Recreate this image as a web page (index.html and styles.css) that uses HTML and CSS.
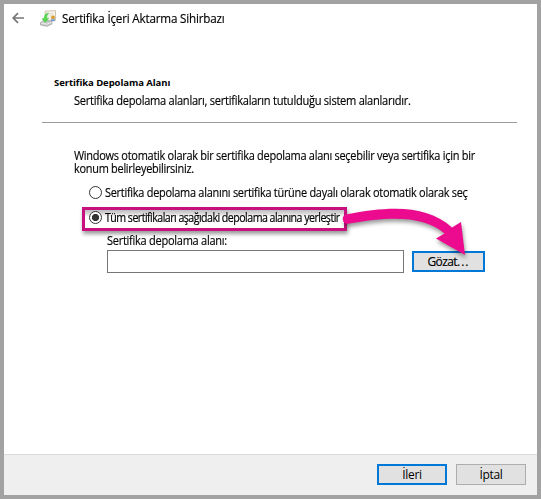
FILE: index.html
```html
<!DOCTYPE html>
<html lang="tr">
<head>
<meta charset="utf-8">
<title>Sertifika İçeri Aktarma Sihirbazı</title>
<link rel="stylesheet" href="styles.css">
</head>
<body>
<div class="window">
  <header class="titlebar">
    <svg class="back" width="13" height="12" viewBox="0 0 13 12"><path d="M12 6H1.500M6 1.200L1.200 6l4.800 4.800" fill="none" stroke="#777" stroke-width="1.700"/></svg>
    <svg class="cert" width="17" height="17" viewBox="0 0 17 17">
      <path d="M5 1.200L15.500 .6v9.600l-9.500 .8z" fill="#f4f0e8" stroke="#c9c0a8" stroke-width=".9"/>
      <path d="M8 4l5-.3M10 6l3-.2" stroke="#ddd7c8" stroke-width=".8"/>
      <path d="M.5 12.500L4 10.200l8 1.200v2.500L7 16.300 .5 15z" fill="#c6c8c6" stroke="#9b9e9b" stroke-width=".7"/>
      <path d="M1 13l6 1.200L12 12" fill="none" stroke="#f4f4f4" stroke-width=".8"/>
      <path d="M8.800 3.200C5.500 3 4.200 5 4.200 8.400L2 8.800 5.200 12.500l3.600-4.200-2 .1C6.600 6 7 4.700 8.800 3.200z" fill="#50d84a" stroke="#55c455" stroke-width=".5"/>
      <path d="M12 8.500v3M14 8.500v2.800" stroke="#3d78c2" stroke-width="1.100" fill="none"/>
      <circle cx="13" cy="7.300" r="1.800" fill="#d99a25"/>
    </svg>
    <h1 class="title">Sertifika İçeri Aktarma Sihirbazı</h1>
  </header>
  <main class="page">
    <h2 class="heading">Sertifika Depolama Alanı</h2>
    <p class="subtitle">Sertifika depolama alanları, sertifikaların tutulduğu sistem alanlarıdır.</p>
    <div class="rule"></div>
    <div class="intro">
      <p class="intro-a">Windows otomatik olarak bir sertifika depolama alanı seçebilir veya sertifika için bir</p>
      <p class="intro-b">konum belirleyebilirsiniz.</p>
    </div>
    <div class="option"><span class="radio"></span><span class="opt-auto">Sertifika depolama alanını sertifika türüne dayalı olarak otomatik olarak seç</span></div>
    <div class="option marked"><span class="radio checked"></span><span class="opt-all">Tüm sertifikaları aşağıdaki depolama alanına yerleştir</span></div>
    <div class="label">Sertifika depolama alanı:</div>
    <div class="picker">
      <div class="field"></div>
      <div class="button primary browse">Gözat<span class="dots">...</span></div>
    </div>
  </main>
  <footer class="footer">
    <div class="button primary">İleri</div>
    <div class="button">İptal</div>
  </footer>
</div>
<svg class="arrow" width="150" height="70" viewBox="340 200 150 70">
  <path d="M346 214.500C394 205 428 206 452 227.500L461 222 465 255 436 238.500 444.500 233.500C424 216 392 216 348 223.800A4.800 4.800 0 0 1 346 214.500Z" fill="#ec0a8e"/>
</svg>
</body>
</html>
```
FILE: styles.css
```css
* { box-sizing: border-box; }
body {
  margin: 0;
  width: 541px;
  height: 499px;
  background: #a2a2a2;
  font: 12px/16px "Open Sans", "Noto Sans", sans-serif;
  color: #000;
  padding: 4px;
  overflow: hidden;
}
h1, h2, p { margin: 0; font-weight: 400; font-size: 12px; }
span, h1, h2, p, .label { white-space: nowrap; transform-origin: 0 50%; }
.window {
  width: 533px;
  height: 491px;
  background: #fff;
  display: flex;
  flex-direction: column;
}
.titlebar {
  height: 28px;
  display: flex;
  align-items: center;
  padding-left: 8px;
}
.cert { margin-left: 15px; }
.title { margin: 2px 0 0 5px; letter-spacing: -0.2px; transform: scaleX(0.972); -webkit-text-stroke: 0.15px #000; }
.page { flex: 1; padding: 43px 20px 0 38px; -webkit-text-stroke: 0.15px #000; }
.heading { margin-left: 12px; height: 16px; font-size: 9.5px; font-weight: 700; letter-spacing: -0.07px; -webkit-text-stroke: 0; }
.subtitle { margin: 2px 0 0 32px; letter-spacing: -0.3px; transform: scaleX(0.925); }
.rule { height: 1px; background: #9b9b9b; margin-top: 13px; }
.intro { margin: 26px 0 0 32px; line-height: 13px; }
.intro-a { letter-spacing: -0.3px; transform: scaleX(0.915); }
.intro-b { letter-spacing: -0.3px; transform: scaleX(0.912); }
.option { display: flex; align-items: center; height: 24px; margin-left: 40px; padding-left: 7px; gap: 3px; }
.intro + .option { margin-top: 5px; }
.radio {
  flex: none;
  width: 13px;
  height: 13px;
  border: 1px solid #333;
  border-radius: 50%;
  background: #fff;
}
.checked { margin-top: -3px; background: radial-gradient(circle, #333 3.2px, #fff 4px); }
.opt-auto { margin-top: 2px; letter-spacing: -0.3px; transform: scaleX(0.913); }
.opt-all { margin-top: -2px; letter-spacing: -0.6px; transform: scaleX(0.886); -webkit-text-stroke: 0.2px #000; }
.marked {
  width: 265px;
  margin-top: 3px;
  border: 3px solid #c8107e;
  padding-left: 4px;
  background: linear-gradient(#bdbdbd, #d4d4d4 3px, #fff 7px);
  box-shadow: 1px 3px 4px rgba(0, 0, 0, 0.4);
}
.label { margin: 2px 0 0 65px; letter-spacing: -0.3px; transform: scaleX(0.92); }
.picker { display: flex; align-items: center; gap: 8px; margin: 1px 0 0 65px; }
.field { width: 297px; height: 23px; border: 1px solid #777; }
.button {
  width: 70px;
  height: 21px;
  border: 1px solid #adadad;
  background: #e1e1e1;
  line-height: 20px;
  text-align: center;
  letter-spacing: -0.3px;
}
.primary { border: 2px solid #0078d7; line-height: 18px; }
.browse { width: 73px; letter-spacing: -0.6px; }
.dots { letter-spacing: 1px; }
.footer {
  height: 41px;
  border-top: 1px solid #dcdcdc;
  background: #efefef;
  display: flex;
  justify-content: flex-end;
  gap: 9px;
  padding: 9px 11px 0 0;
}
.arrow {
  position: absolute;
  left: 340px;
  top: 200px;
  filter: drop-shadow(1px 3px 2px rgba(0, 0, 0, 0.4));
}
```
